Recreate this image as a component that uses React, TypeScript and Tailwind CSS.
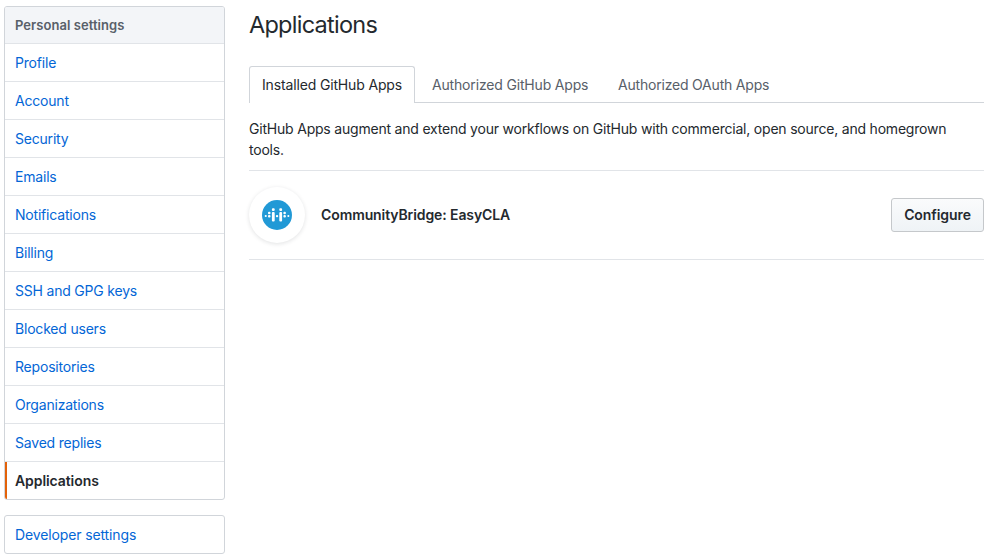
const links = ["Profile","Account","Security","Emails","Notifications","Billing","SSH and GPG keys","Blocked users","Repositories","Organizations","Saved replies"];

// Dots and bars of the app logo: x, y, width, height on a 30px grid
const marks = [
  [2.7, 15, 2.1, 2.1],
  [6, 11.8, 2.5, 2.4], [6, 15, 2.5, 2.4],
  [9.9, 8.2, 2.8, 2.8], [9.9, 12, 2.8, 9.4],
  [13.9, 15, 2.3, 2.3],
  [17.3, 8.2, 2.8, 2.8], [17.3, 12, 2.8, 9.4],
  [21.4, 11.8, 2.5, 2.4], [21.4, 15, 2.5, 2.4],
  [25.3, 15, 2.1, 2.1],
];

export default function App() {
  return (
    <div className="flex h-[559px] w-[991px] items-start overflow-hidden bg-white font-['Inter',sans-serif] text-[14px] leading-[21px] tracking-[-0.2px] text-[#24292e]">
      <aside className="ml-1 mt-1.5 w-[221px] shrink-0">
        <nav className="overflow-hidden rounded-[3px] border border-[#d1d5da]">
          <h2 className="h-[37px] border-b border-[#e1e4e8] bg-[#f3f5f8] pl-2.5 pt-2 text-[13px] font-semibold leading-[21px] tracking-[0.05px] text-[#586069]">Personal settings</h2>
          {links.map((l) => (
            <a key={l} className="block h-[38px] border-b border-[#e1e4e8] pl-2.5 pt-2 text-[#0366d6]">{l}</a>
          ))}
          <a className="block h-[37px] border-l-2 border-[#e36209] pl-2 pt-2 font-semibold tracking-[-0.08px]">Applications</a>
        </nav>
        <nav className="mt-[15px] h-[39px] rounded-[3px] border border-[#d1d5da] pl-2.5 pt-2 tracking-[-0.13px] text-[#0366d6]">Developer settings</nav>
      </aside>
      <main className="ml-6 w-[735px] pt-1.5">
        <h1 className="h-[60px] pt-px text-[23.5px] leading-9 tracking-[-0.74px]">Applications</h1>
        <div className="flex h-[37px] border-b border-[#d1d5da] text-[#586069]">
          <a className="h-[37px] w-[166px] rounded-t-[3px] border border-b-0 border-[#d1d5da] bg-white pl-3 pt-[7px] tracking-[-0.15px] text-[#24292e]">Installed GitHub Apps</a>
          <a className="ml-[17px] w-[156px] whitespace-nowrap pt-2 tracking-[-0.17px]">Authorized GitHub Apps</a>
          <a className="ml-[30px] whitespace-nowrap pt-2">Authorized OAuth Apps</a>
        </div>
        <p className="h-[68px] border-b border-[#e1e4e8] pt-[15px] tracking-[-0.205px]">GitHub Apps augment and extend your workflows on GitHub with commercial, open source, and homegrown tools.</p>
        <div className="flex h-[89px] items-center border-b border-[#e1e4e8]">
          <div className="flex size-14 items-center justify-center rounded-full shadow-[0_1px_4px_rgba(27,31,35,0.13)]">
            <svg viewBox="0 0 30 30" className="size-[30px]">
              <circle cx="15" cy="15" r="15" fill="#2199d6" />
              {marks.map(([x, y, w, h]) => <rect key={`${x}-${y}`} x={x} y={y} width={w} height={h} rx="1" fill="white" />)}
            </svg>
          </div>
          <strong className="mb-0.5 ml-4 font-semibold tracking-[-0.1px]">CommunityBridge: EasyCLA</strong>
          <button className="ml-auto h-[34px] w-[93px] rounded-[3px] border border-[#c5c8cb] bg-linear-to-b from-[#fafbfc] to-[#eff3f6] pb-0.5 font-semibold tracking-[-0.08px]">Configure</button>
        </div>
      </main>
    </div>
  );
}
